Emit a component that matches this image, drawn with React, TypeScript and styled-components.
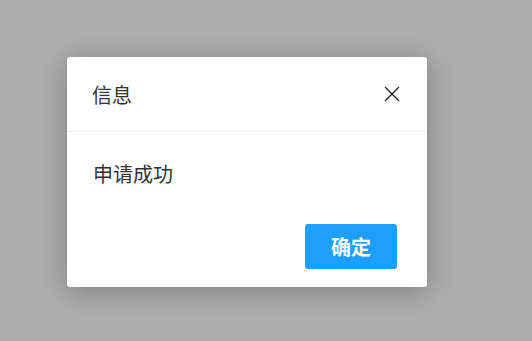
import React from 'react'
import styled, { createGlobalStyle } from 'styled-components'

const GlobalStyle = createGlobalStyle`
  html, body {
    margin: 0;
    padding: 0;
    background: #adadad;
    font-family: "Noto Sans CJK SC", "Noto Sans", sans-serif;
  }
`

export default function App() {
  return (
    <>
      <GlobalStyle />
      <Mask>
        <Dialog>
          <Header>
            <Title>信息</Title>
            <CloseBtn aria-label="close">
              <svg width="16" height="16" viewBox="0 0 16 16">
                <path d="M1 1L15 15M15 1L1 15" stroke="#222" strokeWidth="1.4" fill="none" />
              </svg>
            </CloseBtn>
          </Header>
          <Body>申请成功</Body>
          <Footer>
            <OkBtn>确定</OkBtn>
          </Footer>
        </Dialog>
      </Mask>
    </>
  )
}

const Mask = styled.div`
  width: 532px;
  height: 341px;
  box-sizing: border-box;
  padding: 57px 0 0 67px;
  background: #adadad;
  display: flex;
  align-items: flex-start;
`

const Dialog = styled.div`
  width: 360px;
  height: 230px;
  background: #fff;
  border-radius: 3px;
  box-shadow: 0 4px 28px rgba(0, 0, 0, 0.28);
  display: flex;
  flex-direction: column;
`

const Header = styled.div`
  height: 75px;
  box-sizing: border-box;
  padding: 0 27px 0 25px;
  display: flex;
  align-items: center;
  justify-content: space-between;
  border-bottom: 1px solid #eee;
`

const Title = styled.div`
  font-size: 20px;
  color: #333;
`

const CloseBtn = styled.div`
  width: 16px;
  height: 16px;
  display: flex;
  cursor: pointer;
`

const Body = styled.div`
  padding: 29px 26px 0;
  font-size: 20px;
  line-height: 26px;
  color: #333;
  flex: 1;
`

const Footer = styled.div`
  display: flex;
  justify-content: flex-end;
  padding: 0 30px 18px;
`

const OkBtn = styled.div`
  width: 92px;
  height: 45px;
  border-radius: 3px;
  background: #1e9fff;
  color: #fff;
  font-size: 20px;
  font-weight: 600;
  display: flex;
  align-items: center;
  justify-content: center;
  cursor: pointer;
`
